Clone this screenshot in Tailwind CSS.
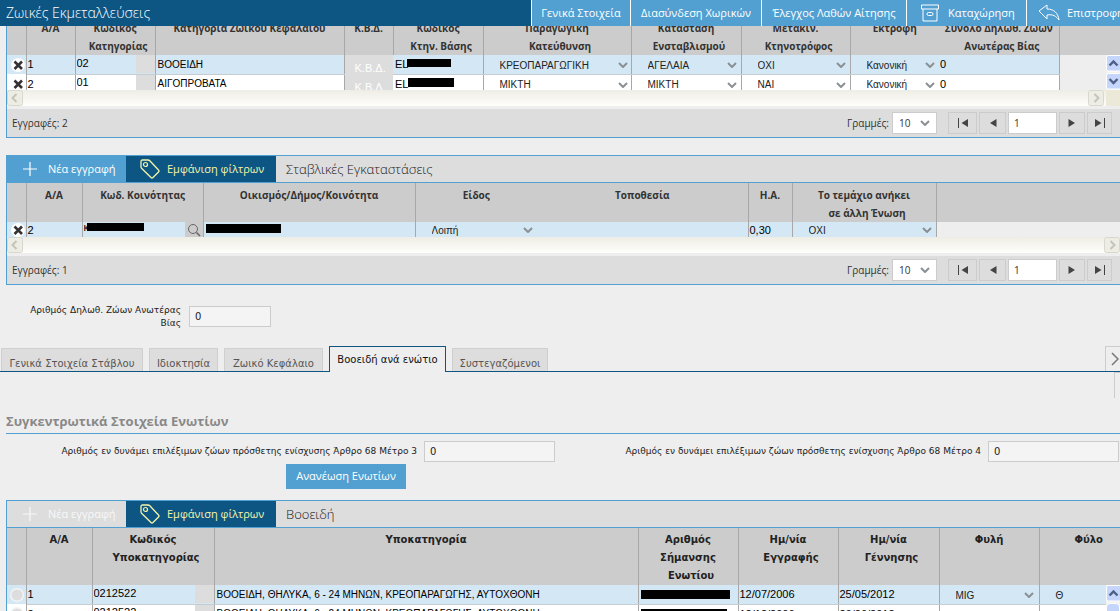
<!DOCTYPE html>
<html lang="el">
<head>
<meta charset="utf-8">
<title>Ζωικές Εκμεταλλεύσεις</title>
<script src="https://cdn.jsdelivr.net/npm/@tailwindcss/browser@4"></script>
</head>
<body class="h-screen overflow-hidden bg-[#eeeeee] font-['Liberation_Sans',sans-serif] text-[11px] text-black">

<svg class="hidden">
  <symbol id="chev" viewBox="0 0 10 6"><path d="M1 1l4 4 4-4" fill="none" stroke="#8a9094" stroke-width="2"/></symbol>
  <symbol id="del" viewBox="0 0 14 14"><circle cx="7" cy="7" r="7" fill="#fff"/><path d="M3.500 3.500l7.500 7.500M11 3.500l-7.500 7.500" stroke="#333" stroke-width="2.600"/></symbol>
  <symbol id="off" viewBox="0 0 14 14"><circle cx="7" cy="7" r="6.300" fill="#ddd" stroke="#f4f4f4" stroke-width="1.400"/></symbol>
  <symbol id="plus" viewBox="0 0 14 14"><path d="M7 0v14M0 7h14" stroke="currentColor" stroke-width="1.200"/></symbol>
  <symbol id="tag" viewBox="0 0 20 20"><path d="M1 2.500Q1 1 2.500 1H8q1 0 1.800.8L18.500 11q1 1 0 2l-5.500 5.500q-1 1-2 0L1.800 9.500Q1 8.800 1 8z" fill="none" stroke="currentColor" stroke-width="1.300"/><circle cx="5.500" cy="5.500" r="2" fill="none" stroke="currentColor" stroke-width="1.200"/></symbol>
  <symbol id="first" viewBox="0 0 12 10"><path d="M1.500 0v10" stroke="#444" stroke-width="1"/><path d="M11 1v8L4.500 5z" fill="#444"/></symbol>
  <symbol id="prev" viewBox="0 0 12 10"><path d="M9.500 1v8L3 5z" fill="#444"/></symbol>
  <symbol id="next" viewBox="0 0 12 10"><path d="M2.500 1v8L9 5z" fill="#444"/></symbol>
  <symbol id="last" viewBox="0 0 12 10"><path d="M10.500 0v10" stroke="#444" stroke-width="1"/><path d="M1 1v8l6.500-4z" fill="#444"/></symbol>
  <symbol id="sleft" viewBox="0 0 16 16"><rect x=".5" y=".5" width="15" height="15" rx="2" fill="#edede5" stroke="#d9d8cc"/><path d="M9.500 4l-4 4 4 4" fill="none" stroke="#c4c4b8" stroke-width="2"/></symbol>
  <symbol id="sright" viewBox="0 0 16 16"><rect x=".5" y=".5" width="15" height="15" rx="2" fill="#edede5" stroke="#d9d8cc"/><path d="M6.500 4l4 4-4 4" fill="none" stroke="#c4c4b8" stroke-width="2"/></symbol>
  <symbol id="sup" viewBox="0 0 14 17"><rect x=".5" y=".5" width="15" height="15.500" rx="2" fill="#c5d5fb" stroke="#fff"/><path d="M3.500 10.500l4-4 4 4" fill="none" stroke="#4d6185" stroke-width="2.400"/></symbol>
  <symbol id="sdown" viewBox="0 0 14 17"><rect x=".5" y=".5" width="15" height="15.500" rx="2" fill="#c5d5fb" stroke="#fff"/><path d="M3.500 6l4 4 4-4" fill="none" stroke="#4d6185" stroke-width="2.400"/></symbol>
</svg>

<!-- Title bar -->
<header class="relative z-10 flex h-[26px] bg-[#0d5684] font-['Open_Sans',sans-serif] text-[11px] text-white">
  <h1 class="flex-1 pl-[6px] text-[14px] leading-[26px] font-light">Ζωικές Εκμεταλλεύσεις</h1>
  <nav class="flex">
    <button class="w-[99px] border-l border-white bg-[#529fd1]">Γενικά Στοιχεία</button>
    <button class="w-[131px] border-l border-white bg-[#529fd1]">Διασύνδεση Χωρικών</button>
    <button class="w-[145px] border-l border-white bg-[#529fd1]">Έλεγχος Λαθών Αίτησης</button>
    <button class="flex w-[120px] items-center gap-[9px] border-l border-white bg-[#529fd1] pl-[14px]">
      <svg class="h-[18px] w-[18px]" viewBox="0 0 18 18" fill="none" stroke="#fff"><path d="M.5 1h17v4H.5zM2 5v12h14V5"/><rect x="6" y="8.500" width="6" height="3" rx="1.500"/></svg>
      Καταχώρηση</button>
    <button class="flex w-[94px] items-center gap-[7px] overflow-hidden border-l border-white bg-[#529fd1] pl-[11px] whitespace-nowrap">
      <svg class="h-[18px] w-[22px] shrink-0" viewBox="0 0 22 18" fill="none" stroke="#fff" stroke-linejoin="round"><path d="M1 7l8-6v4c7 0 11 4 12 11-3-4-6-6-12-5v4z"/></svg>
      Επιστροφή</button>
  </nav>
</header>

<!-- Livestock grid -->
<section class="ml-[6px] border-b border-l border-[#529fd1]">
  <div class="relative h-[64px] overflow-hidden">
    <table class="-mt-[10px] w-full table-fixed border-collapse">
      <colgroup><col class="w-[19px]"><col class="w-[49px]"><col class="w-[80px]"><col class="w-[189px]"><col class="w-[49px]"><col class="w-[90px]"><col class="w-[148px]"><col class="w-[110px]"><col class="w-[109px]"><col class="w-[89px]"><col class="w-[120px]"><col></colgroup>
      <thead>
        <tr class="h-[39px] bg-[#cccccc] align-top font-['Open_Sans',sans-serif] text-[10px] leading-[18px] text-[#333]">
          <th class="border-r border-[#a8a8a8] p-0"></th>
          <th class="border-r border-[#a8a8a8] p-0 pt-[3px]">Α/Α</th>
          <th class="border-r border-[#a8a8a8] p-0 pt-[3px]">Κωδικός<br><span class="pl-[6px]">Κατηγορίας</span></th>
          <th class="border-r border-[#a8a8a8] p-0 pt-[3px] whitespace-nowrap">Κατηγορία Ζωϊκού Κεφαλαίου</th>
          <th class="border-r border-[#a8a8a8] p-0 pt-[3px]">Κ.Β.Δ.</th>
          <th class="border-r border-[#a8a8a8] p-0 pt-[3px]">Κωδικός<br><span class="pl-[6px]">Κτην. Βάσης</span></th>
          <th class="border-r border-[#a8a8a8] p-0 pt-[3px]">Παραγωγική<br><span class="pl-[6px]">Κατεύθυνση</span></th>
          <th class="border-r border-[#a8a8a8] p-0 pt-[3px]">Κατάσταση<br><span class="pl-[6px]">Ενσταβλισμού</span></th>
          <th class="border-r border-[#a8a8a8] p-0 pt-[3px]">Μετακιν.<br><span class="pl-[6px]">Κτηνοτρόφος</span></th>
          <th class="p-0 pt-[3px]">Εκτροφή</th>
          <th class="border-r border-[#a8a8a8] p-0 pt-[3px] whitespace-nowrap">Σύνολο Δηλωθ. Ζώων<br><span class="pl-[6px]">Ανωτέρας Βίας</span></th>
          <th class="p-0"></th>
        </tr>
      </thead>
      <tbody>
        <tr class="h-[19px]">
          <td class="border-r border-[#a8a8a8] bg-[#d3e7f4] p-0 pl-[4px]"><button class="block" aria-label="Διαγραφή 1"><svg class="h-[14px] w-[14px]"><use href="#del"/></svg></button></td>
          <td class="border-r border-b border-[#a8a8a8] border-b-[#c5cdd2] bg-[#d3e7f4] p-0 pl-[1px]">1</td>
          <td class="border-r border-b border-[#a8a8a8] border-b-[#c5cdd2] bg-[#d3e7f4] p-0"><div class="flex h-[18px]"><input class="min-w-0 flex-1 pl-[1px] pb-[3px]" aria-label="Κωδικός κατηγορίας 1" value="02"><span class="w-[19px] bg-[#dddddd]"></span></div></td>
          <td class="border-r border-b border-[#a8a8a8] border-b-[#c5cdd2] bg-[#d3e7f4] p-0 pl-[2px] text-[10px]">ΒΟΟΕΙΔΗ</td>
          <td class="bg-[#dddddd] p-0 pt-[7px] pl-[10px] text-[11px] leading-[12px] text-white">Κ.Β.Δ.</td>
          <td class="border-r border-b border-[#a8a8a8] border-b-[#c5cdd2] bg-[#d3e7f4] p-0 pl-[2px]"><div class="flex items-center">EL<span class="-ml-px mb-[2px] h-[8px] w-[44px] bg-black"></span></div></td>
          <td class="border-r border-b border-[#a8a8a8] border-b-[#c5cdd2] bg-[#d3e7f4] p-0"><div class="flex items-center pt-[2px] pr-[3px] pl-[16px]"><select class="min-w-0 flex-1 appearance-none text-[10px] text-[#222]" aria-label="Παραγωγική κατεύθυνση 1"><option>ΚΡΕΟΠΑΡΑΓΩΓΙΚΗ</option></select><svg class="h-[6px] w-[10px]"><use href="#chev"/></svg></div></td>
          <td class="border-r border-b border-[#a8a8a8] border-b-[#c5cdd2] bg-[#d3e7f4] p-0"><div class="flex items-center pt-[2px] pr-[4px] pl-[16px]"><select class="min-w-0 flex-1 appearance-none text-[10px] text-[#222]" aria-label="Κατάσταση ενσταβλισμού 1"><option>ΑΓΕΛΑΙΑ</option></select><svg class="h-[6px] w-[10px]"><use href="#chev"/></svg></div></td>
          <td class="border-r border-b border-[#a8a8a8] border-b-[#c5cdd2] bg-[#d3e7f4] p-0"><div class="flex items-center pt-[2px] pr-[4px] pl-[16px]"><select class="min-w-0 flex-1 appearance-none text-[10px] text-[#222]" aria-label="Μετακινούμενος 1"><option>ΟΧΙ</option></select><svg class="h-[6px] w-[10px]"><use href="#chev"/></svg></div></td>
          <td class="border-b border-[#c5cdd2] bg-[#d3e7f4] p-0"><div class="flex items-center pt-[2px] pr-[4px] pl-[16px]"><select class="min-w-0 flex-1 appearance-none text-[10px] text-[#222]" aria-label="Εκτροφή 1"><option>Κανονική</option></select><svg class="h-[6px] w-[10px]"><use href="#chev"/></svg></div></td>
          <td class="border-r border-b border-[#a8a8a8] border-b-[#c5cdd2] bg-[#d3e7f4] p-0 pl-[1px]">0</td>
          <td class="p-0"></td>
        </tr>
        <tr class="h-[19px]">
          <td class="border-r border-[#a8a8a8] bg-white p-0 pl-[4px]"><button class="block" aria-label="Διαγραφή 2"><svg class="h-[14px] w-[14px]"><use href="#del"/></svg></button></td>
          <td class="border-r border-[#a8a8a8] bg-white p-0 pl-[1px]">2</td>
          <td class="border-r border-[#a8a8a8] bg-white p-0"><div class="flex h-[18px]"><input class="min-w-0 flex-1 pl-[1px] pb-[3px]" aria-label="Κωδικός κατηγορίας 2" value="01"><span class="w-[19px] bg-[#dddddd]"></span></div></td>
          <td class="border-r border-[#a8a8a8] bg-white p-0 pl-[2px] text-[10px]">ΑΙΓΟΠΡΟΒΑΤΑ</td>
          <td class="bg-[#dddddd] p-0 pt-[7px] pl-[10px] text-[11px] leading-[12px] text-white">Κ.Β.Δ.</td>
          <td class="border-r border-[#a8a8a8] bg-white p-0 pl-[2px]"><div class="flex items-center">EL<span class="mb-[2px] h-[9px] w-[46px] border-b border-dotted border-black bg-black"></span></div></td>
          <td class="border-r border-[#a8a8a8] bg-white p-0"><div class="flex items-center pt-[2px] pr-[3px] pl-[16px]"><select class="min-w-0 flex-1 appearance-none text-[10px] text-[#222]" aria-label="Παραγωγική κατεύθυνση 2"><option>ΜΙΚΤΗ</option></select><svg class="h-[6px] w-[10px]"><use href="#chev"/></svg></div></td>
          <td class="border-r border-[#a8a8a8] bg-white p-0"><div class="flex items-center pt-[2px] pr-[4px] pl-[16px]"><select class="min-w-0 flex-1 appearance-none text-[10px] text-[#222]" aria-label="Κατάσταση ενσταβλισμού 2"><option>ΜΙΚΤΗ</option></select><svg class="h-[6px] w-[10px]"><use href="#chev"/></svg></div></td>
          <td class="border-r border-[#a8a8a8] bg-white p-0"><div class="flex items-center pt-[2px] pr-[4px] pl-[16px]"><select class="min-w-0 flex-1 appearance-none text-[10px] text-[#222]" aria-label="Μετακινούμενος 2"><option>ΝΑΙ</option></select><svg class="h-[6px] w-[10px]"><use href="#chev"/></svg></div></td>
          <td class="bg-white p-0"><div class="flex items-center pt-[2px] pr-[4px] pl-[16px]"><select class="min-w-0 flex-1 appearance-none text-[10px] text-[#222]" aria-label="Εκτροφή 2"><option>Κανονική</option></select><svg class="h-[6px] w-[10px]"><use href="#chev"/></svg></div></td>
          <td class="border-r border-[#a8a8a8] bg-white p-0 pl-[1px]">0</td>
          <td class="p-0"></td>
        </tr>
      </tbody>
    </table>
    <div class="absolute top-[29px] right-0 flex w-[14px] flex-col gap-px bg-[#f3f3ee]">
      <svg class="h-[17px] w-[14px]"><use href="#sup"/></svg>
      <svg class="h-[17px] w-[14px]"><use href="#sdown"/></svg>
    </div>
  </div>
  <div class="flex h-[16px] bg-linear-to-b from-[#eeede5] to-[#fefefb]">
    <svg class="h-[16px] w-[16px]"><use href="#sleft"/></svg>
    <svg class="ml-auto h-[16px] w-[16px]"><use href="#sright"/></svg>
    <span class="ml-[2px] w-[14px] bg-[#ece9d8]"></span>
  </div>
  <div class="mt-[3px] flex h-[28px] items-center bg-[#dddddd] pr-[8px] pl-[5px] font-['Open_Sans',sans-serif] text-[10px] text-[#333]">
    <span class="flex-1">Εγγραφές: 2</span>
    <label for="rows1" class="pr-[3px]">Γραμμές:</label>
    <div class="mr-[11px] flex h-[22px] w-[45px] items-center border border-[#cccccc] bg-white pr-[6px] pl-[6px]"><select id="rows1" class="min-w-0 flex-1 appearance-none"><option>10</option></select><svg class="h-[6px] w-[10px]"><use href="#chev"/></svg></div>
    <div class="flex gap-[2px]">
      <button class="flex h-[22px] w-[29px] items-center justify-center border border-[#cccccc]" aria-label="Πρώτη"><svg class="h-[10px] w-[12px]"><use href="#first"/></svg></button>
      <button class="flex h-[22px] w-[27px] items-center justify-center border border-[#cccccc]" aria-label="Προηγούμενη"><svg class="h-[10px] w-[12px]"><use href="#prev"/></svg></button>
      <input class="h-[22px] w-[49px] border border-[#cccccc] bg-white pl-[5px]" aria-label="Σελίδα" value="1">
      <button class="flex h-[22px] w-[26px] items-center justify-center border border-[#cccccc]" aria-label="Επόμενη"><svg class="h-[10px] w-[12px]"><use href="#next"/></svg></button>
      <button class="flex h-[22px] w-[25px] items-center justify-center border border-[#cccccc]" aria-label="Τελευταία"><svg class="h-[10px] w-[12px]"><use href="#last"/></svg></button>
    </div>
  </div>
</section>

<!-- Stable facilities grid -->
<section class="mt-[17px] ml-[6px] border-y border-l border-[#529fd1]">
  <div class="flex h-[27px] border-b border-[#529fd1] bg-[#dddddd] font-['Open_Sans',sans-serif] text-[11px]">
    <button class="flex w-[119px] items-center gap-[11px] bg-[#529fd1] pl-[16px] text-white"><svg class="h-[14px] w-[14px]"><use href="#plus"/></svg>Νέα εγγραφή</button>
    <button class="flex w-[150px] items-center gap-[7px] bg-[#0d5684] pl-[14px] text-[#f5f5a8]"><svg class="h-[20px] w-[20px]"><use href="#tag"/></svg>Εμφάνιση φίλτρων</button>
    <h2 class="pl-[10px] text-[13px] leading-[26px] font-light text-[#222]">Σταβλικές Εγκαταστάσεις</h2>
  </div>
  <div class="h-[54px] overflow-hidden">
    <table class="w-full table-fixed border-collapse">
      <colgroup><col class="w-[19px]"><col class="w-[56px]"><col class="w-[121px]"><col class="w-[212px]"><col class="w-[122px]"><col class="w-[211px]"><col class="w-[44px]"><col class="w-[144px]"><col></colgroup>
      <thead>
        <tr class="h-[39px] bg-[#cccccc] align-top font-['Open_Sans',sans-serif] text-[10px] leading-[18px] text-[#333]">
          <th class="border-r border-[#a8a8a8] p-0"></th>
          <th class="border-r border-[#a8a8a8] p-0 pt-[3px]">Α/Α</th>
          <th class="border-r border-[#a8a8a8] p-0 pt-[3px]">Κωδ. Κοινότητας</th>
          <th class="border-r border-[#a8a8a8] p-0 pt-[3px]">Οικισμός/Δήμος/Κοινότητα</th>
          <th class="p-0 pt-[3px]">Είδος</th>
          <th class="border-r border-[#a8a8a8] p-0 pt-[3px]">Τοποθεσία</th>
          <th class="border-r border-[#a8a8a8] p-0 pt-[3px]">Η.Α.</th>
          <th class="border-r border-[#a8a8a8] p-0 pt-[3px]">Το τεμάχιο ανήκει<br><span class="pl-[6px]">σε άλλη Ένωση</span></th>
          <th class="p-0"></th>
        </tr>
      </thead>
      <tbody>
        <tr class="h-[16px]">
          <td class="border-r border-[#a8a8a8] bg-[#d3e7f4] p-0 pl-[4px]"><button class="block" aria-label="Διαγραφή εγκατάστασης 2"><svg class="h-[14px] w-[14px]"><use href="#del"/></svg></button></td>
          <td class="border-r border-[#a8a8a8] bg-[#d3e7f4] p-0 pl-[1px]">2</td>
          <td class="border-r border-[#a8a8a8] bg-[#d3e7f4] p-0"><div class="flex h-[16px]"><div class="flex flex-1 items-start pl-[1px]"><span class="w-[3px] overflow-hidden leading-[10px]">κ</span><span class="mt-[1px] h-[8px] w-[57px] bg-black"></span></div><button class="flex w-[18px] items-center justify-center bg-[#cccccc]" aria-label="Αναζήτηση"><svg class="h-[14px] w-[14px]" viewBox="0 0 14 14" fill="none" stroke="#666"><circle cx="6" cy="6" r="4.500"/><path d="M9.500 9.500l3.500 3.500" stroke-width="1.600"/></svg></button></div></td>
          <td class="border-r border-[#a8a8a8] bg-[#d3e7f4] p-0 pl-[2px] align-top"><div class="mt-[2px] h-[9px] w-[75px] border-b-2 border-dotted border-black bg-black"></div></td>
          <td class="bg-[#d3e7f4] p-0"><div class="flex items-center pr-[4px] pl-[16px]"><select class="min-w-0 flex-1 appearance-none text-[10px] text-[#222]" aria-label="Είδος"><option>Λοιπή</option></select><svg class="h-[6px] w-[10px]"><use href="#chev"/></svg></div></td>
          <td class="border-r border-[#a8a8a8] bg-[#d3e7f4] p-0"></td>
          <td class="border-r border-[#a8a8a8] bg-[#d3e7f4] p-0 pl-[1px]">0,30</td>
          <td class="border-r border-[#a8a8a8] bg-[#d3e7f4] p-0"><div class="flex items-center pr-[4px] pl-[16px]"><select class="min-w-0 flex-1 appearance-none text-[10px] text-[#222]" aria-label="Το τεμάχιο ανήκει σε άλλη Ένωση"><option>ΟΧΙ</option></select><svg class="h-[6px] w-[10px]"><use href="#chev"/></svg></div></td>
          <td class="p-0"></td>
        </tr>
      </tbody>
    </table>
  </div>
  <div class="flex h-[16px] bg-linear-to-b from-[#eeede5] to-[#fefefb]">
    <svg class="h-[16px] w-[16px]"><use href="#sleft"/></svg>
    <svg class="ml-auto h-[16px] w-[16px]"><use href="#sright"/></svg>
  </div>
  <div class="mt-[3px] flex h-[28px] items-center bg-[#dddddd] pr-[8px] pl-[5px] font-['Open_Sans',sans-serif] text-[10px] text-[#333]">
    <span class="flex-1">Εγγραφές: 1</span>
    <label for="rows2" class="pr-[3px]">Γραμμές:</label>
    <div class="mr-[11px] flex h-[22px] w-[45px] items-center border border-[#cccccc] bg-white pr-[6px] pl-[6px]"><select id="rows2" class="min-w-0 flex-1 appearance-none"><option>10</option></select><svg class="h-[6px] w-[10px]"><use href="#chev"/></svg></div>
    <div class="flex gap-[2px]">
      <button class="flex h-[22px] w-[29px] items-center justify-center border border-[#cccccc]" aria-label="Πρώτη"><svg class="h-[10px] w-[12px]"><use href="#first"/></svg></button>
      <button class="flex h-[22px] w-[27px] items-center justify-center border border-[#cccccc]" aria-label="Προηγούμενη"><svg class="h-[10px] w-[12px]"><use href="#prev"/></svg></button>
      <input class="h-[22px] w-[49px] border border-[#cccccc] bg-white pl-[5px]" aria-label="Σελίδα" value="1">
      <button class="flex h-[22px] w-[26px] items-center justify-center border border-[#cccccc]" aria-label="Επόμενη"><svg class="h-[10px] w-[12px]"><use href="#next"/></svg></button>
      <button class="flex h-[22px] w-[25px] items-center justify-center border border-[#cccccc]" aria-label="Τελευταία"><svg class="h-[10px] w-[12px]"><use href="#last"/></svg></button>
    </div>
  </div>
</section>

<!-- Declared animals -->
<div class="mt-[19px] flex items-start gap-[8px] pl-[21px] font-['DejaVu_Sans',sans-serif] text-[9px] text-[#222]">
  <label for="declared" class="w-[160px] text-right leading-[13px]">Αριθμός Δηλωθ. Ζώων Ανωτέρας Βίας</label>
  <input id="declared" class="mt-[2px] h-[21px] w-[82px] border border-[#cccccc] bg-[#f4f4f4] pl-[5px] text-[10px]" value="0">
</div>

<!-- Tabs -->
<div class="mt-[13px] flex h-[29px] items-end border-b border-[#0d5684] pl-px font-['DejaVu_Sans',sans-serif] text-[10px] text-[#555]">
  <div class="flex flex-1 items-end gap-[6px]" role="tablist">
    <button role="tab" class="h-[23px] w-[142px] border border-b-0 border-[#cfcfcf] bg-[#dddddd] pt-[7px] whitespace-nowrap">Γενικά Στοιχεία Στάβλου</button>
    <button role="tab" class="h-[23px] w-[69px] border border-b-0 border-[#cfcfcf] bg-[#dddddd] pt-[7px] whitespace-nowrap">Ιδιοκτησία</button>
    <button role="tab" class="h-[23px] w-[99px] border border-b-0 border-[#cfcfcf] bg-[#dddddd] pt-[7px] whitespace-nowrap">Ζωικό Κεφάλαιο</button>
    <button role="tab" aria-selected="true" class="-mb-px h-[26px] w-[117px] border border-b-0 border-[#0d5684] bg-[#eeeeee] whitespace-nowrap text-[#111]">Βοοειδή ανά ενώτιο</button>
    <button role="tab" class="h-[23px] w-[96px] border border-b-0 border-[#cfcfcf] bg-[#dddddd] pt-[7px] whitespace-nowrap">Συστεγαζόμενοι</button>
  </div>
  <button class="flex h-[25px] w-[15px] items-center justify-end border-t border-l border-[#cccccc] pr-px" aria-label="Επόμενες καρτέλες"><svg class="h-[14px] w-[8px]" viewBox="0 0 8 14"><path d="M1 1l6 6-6 6" fill="none" stroke="#777" stroke-width="1.500"/></svg></button>
</div>
<div class="ml-auto h-[26px] w-[6px] border-t border-l border-[#cccccc]"></div>

<!-- Ear-tag summary -->
<section class="mt-[13px] ml-[6px]">
  <h2 class="border-b border-[#529fd1] pb-[2px] font-['Open_Sans',sans-serif] text-[13px] leading-[20px] font-bold text-[#888]">Συγκεντρωτικά Στοιχεία Ενωτίων</h2>
  <div class="mt-[7px] mr-px flex justify-between font-['DejaVu_Sans',sans-serif] text-[9px] text-[#222]">
    <div class="flex w-[549px] items-center justify-end gap-[7px]"><label for="m3" class="whitespace-nowrap">Αριθμός εν δυνάμει επιλέξιμων ζώων πρόσθετης ενίσχυσης Άρθρο 68 Μέτρο 3</label><input id="m3" class="h-[21px] w-[131px] border border-[#cccccc] bg-[#f4f4f4] pl-[5px] text-[10px]" value="0"></div>
    <div class="flex flex-1 items-center justify-end gap-[7px]"><label for="m4" class="whitespace-nowrap">Αριθμός εν δυνάμει επιλέξιμων ζώων πρόσθετης ενίσχυσης Άρθρο 68 Μέτρο 4</label><input id="m4" class="h-[21px] w-[131px] border border-[#cccccc] bg-[#f4f4f4] pl-[5px] text-[10px]" value="0"></div>
  </div>
  <button class="mt-[2px] ml-[280px] block h-[25px] w-[120px] bg-[#529fd1] font-['Open_Sans',sans-serif] text-[11px] text-white">Ανανέωση Ενωτίων</button>
</section>

<!-- Cattle grid -->
<section class="mt-[11px] ml-[6px] border-t border-l border-[#529fd1]">
  <div class="flex h-[27px] border-b border-[#529fd1] bg-[#dddddd] font-['Open_Sans',sans-serif] text-[11px]">
    <button class="flex w-[119px] items-center gap-[11px] pl-[16px] text-[#f8f8f8]" disabled><svg class="h-[14px] w-[14px]"><use href="#plus"/></svg>Νέα εγγραφή</button>
    <button class="flex w-[150px] items-center gap-[7px] bg-[#0d5684] pl-[14px] text-[#f5f5a8]"><svg class="h-[20px] w-[20px]"><use href="#tag"/></svg>Εμφάνιση φίλτρων</button>
    <h2 class="pl-[10px] text-[13px] leading-[26px] font-light text-[#222]">Βοοειδή</h2>
  </div>
  <div class="relative">
    <table class="w-full table-fixed border-collapse">
      <colgroup><col class="w-[19px]"><col class="w-[66px]"><col class="w-[122px]"><col class="w-[424px]"><col class="w-[100px]"><col class="w-[100px]"><col class="w-[101px]"><col class="w-[100px]"><col></colgroup>
      <thead>
        <tr class="h-[57px] bg-[#cccccc] align-top font-['DejaVu_Sans',sans-serif] text-[10px] leading-[18px] text-[#222]">
          <th class="border-r border-[#a8a8a8] p-0"></th>
          <th class="border-r border-[#a8a8a8] p-0 pt-[3px]">Α/Α</th>
          <th class="border-r border-[#a8a8a8] p-0 pt-[3px]">Κωδικός<br><span class="pl-[6px]">Υποκατηγορίας</span></th>
          <th class="border-r border-[#a8a8a8] p-0 pt-[3px]">Υποκατηγορία</th>
          <th class="border-r border-[#a8a8a8] p-0 pt-[3px]">Αριθμός<br>Σήμανσης<br><span class="pl-[6px]">Ενωτίου</span></th>
          <th class="border-r border-[#a8a8a8] p-0 pt-[3px]">Ημ/νία<br><span class="pl-[6px]">Εγγραφής</span></th>
          <th class="border-r border-[#a8a8a8] p-0 pt-[3px]">Ημ/νία<br><span class="pl-[6px]">Γέννησης</span></th>
          <th class="border-r border-[#a8a8a8] p-0 pt-[3px]">Φυλή</th>
          <th class="p-0 pt-[3px] pl-[18px]">Φύλο</th>
        </tr>
      </thead>
      <tbody>
        <tr class="h-[19px] bg-[#d3e7f4]">
          <td class="border-r border-[#a8a8a8] p-0 pl-[3px]"><svg class="block h-[14px] w-[14px]"><use href="#off"/></svg></td>
          <td class="border-r border-b border-[#a8a8a8] border-b-[#c5cdd2] p-0 pl-[1px]">1</td>
          <td class="border-r border-b border-[#a8a8a8] border-b-[#c5cdd2] p-0"><div class="flex h-[18px]"><input class="min-w-0 flex-1 pb-[3px] pl-[1px]" aria-label="Κωδικός υποκατηγορίας 1" value="0212522"><span class="w-[19px] bg-[#dddddd]"></span></div></td>
          <td class="border-r border-b border-[#a8a8a8] border-b-[#c5cdd2] p-0 pl-[2px] text-[10px] whitespace-nowrap">ΒΟΟΕΙΔΗ, ΘΗΛΥΚΑ, 6 - 24 ΜΗΝΩΝ, ΚΡΕΟΠΑΡΑΓΩΓΗΣ, ΑΥΤΟΧΘΟΝΗ</td>
          <td class="border-r border-b border-[#a8a8a8] border-b-[#c5cdd2] p-0 pl-[2px]"><div class="h-[9px] w-[89px] border-b border-dotted border-black bg-black"></div></td>
          <td class="border-r border-b border-[#a8a8a8] border-b-[#c5cdd2] p-0 pl-[1px]">12/07/2006</td>
          <td class="border-r border-b border-[#a8a8a8] border-b-[#c5cdd2] p-0 pl-[1px]">25/05/2012</td>
          <td class="border-r border-b border-[#a8a8a8] border-b-[#c5cdd2] p-0"><div class="flex items-center pt-[2px] pr-[5px] pl-[16px]"><select class="min-w-0 flex-1 appearance-none text-[10px] text-[#222]" aria-label="Φυλή 1"><option>MIG</option></select><svg class="h-[6px] w-[10px]"><use href="#chev"/></svg></div></td>
          <td class="border-b border-[#c5cdd2] p-0 pt-[2px] pl-[16px] text-[10px] text-[#222]">Θ</td>
        </tr>
        <tr class="h-[19px] bg-white">
          <td class="border-r border-[#a8a8a8] p-0 pl-[3px]"><svg class="block h-[14px] w-[14px]"><use href="#off"/></svg></td>
          <td class="border-r border-[#a8a8a8] p-0 pl-[1px]">2</td>
          <td class="border-r border-[#a8a8a8] p-0"><div class="flex h-[18px]"><input class="min-w-0 flex-1 pb-[3px] pl-[1px]" aria-label="Κωδικός υποκατηγορίας 2" value="0212522"><span class="w-[19px] bg-[#dddddd]"></span></div></td>
          <td class="border-r border-[#a8a8a8] p-0 pl-[2px] text-[10px] whitespace-nowrap">ΒΟΟΕΙΔΗ, ΘΗΛΥΚΑ, 6 - 24 ΜΗΝΩΝ, ΚΡΕΟΠΑΡΑΓΩΓΗΣ, ΑΥΤΟΧΘΟΝΗ</td>
          <td class="border-r border-[#a8a8a8] p-0 pl-[2px]"><div class="h-[9px] w-[86px] bg-black"></div></td>
          <td class="border-r border-[#a8a8a8] p-0 pl-[1px]">12/12/2006</td>
          <td class="border-r border-[#a8a8a8] p-0 pl-[1px]">26/06/2012</td>
          <td class="border-r border-[#a8a8a8] p-0"></td>
          <td class="p-0"></td>
        </tr>
      </tbody>
    </table>
    <div class="absolute top-[57px] right-0 flex w-[14px] flex-col gap-px bg-[#f3f3ee]">
      <svg class="h-[17px] w-[14px]"><use href="#sup"/></svg>
      <div class="h-[20px] rounded-sm border border-white bg-[#c5d5fb]"></div>
    </div>
  </div>
</section>
</body>
</html>
